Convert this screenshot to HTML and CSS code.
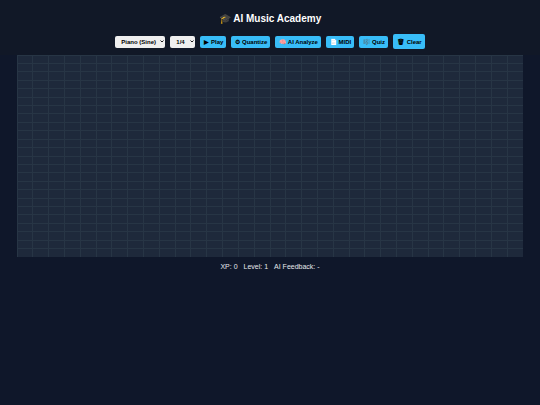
FILE: index.html
```
<!DOCTYPE html>
<html lang="en">
<head>
<meta charset="UTF-8">
<meta name="viewport" content="width=device-width, initial-scale=1.0">
<title>AI Music Academy</title>
<link rel="stylesheet" href="styles.css">
</head>
<body>

<header>
  <h1>🎓 AI Music Academy</h1>
  <div class="controls">
    <select id="instrument" class="instrument" aria-label="Instrument">
      <option value="sine">Piano (Sine)</option>
      <option value="square">Synth</option>
      <option value="triangle">Flute</option>
    </select>
    <select id="noteLength" class="length" aria-label="Note length">
      <option value="1">1/4</option>
      <option value="0.5">1/8</option>
      <option value="0.25">1/16</option>
    </select>
    <button id="play">▶ Play</button>
    <button id="quantize">⚙ Quantize</button>
    <button id="analyze">🧠 AI Analyze</button>
    <button id="midi">📄 MIDI</button>
    <button id="quiz">🎼 Quiz</button>
    <button id="clear" class="clear">🗑 Clear</button>
  </div>
</header>

<main>
  <canvas id="roll"></canvas>
  <div class="status">
    <span>XP: <span id="xp">0</span></span>
    <span>Level: <span id="level">1</span></span>
    <span>AI Feedback: <span id="feedback">-</span></span>
  </div>
</main>

<script src="script.js"></script>
</body>
</html>
```

FILE: styles.css
```
body {
  margin: 0;
  background: #0f172a;
  color: #e5e7eb;
  font-family: "Liberation Sans", Arial, sans-serif;
}

header {
  background: #111827;
  padding: 12px 8px 6px;
  text-align: center;
}

h1 {
  margin: 0 0 9px;
  font-size: 10px;
  line-height: 13px;
  color: #fff;
}

.controls {
  display: flex;
  flex-wrap: wrap;
  justify-content: center;
  align-items: center;
  gap: 5px;
}

button,
select {
  box-sizing: border-box;
  height: 12px;
  padding: 0 3px 0 4px;
  border: none;
  border-radius: 2px;
  font-family: inherit;
  font-size: 6px;
  font-weight: bold;
  line-height: 12px;
  color: #000;
  white-space: nowrap;
}

button {
  background: #38bdf8;
  cursor: pointer;
}

button:hover {
  background: #0ea5e9;
}

.clear {
  height: 15px;
}

select {
  appearance: none;
  padding: 0 6px;
  background: #efefef url("data:image/svg+xml,%3Csvg xmlns='http://www.w3.org/2000/svg' viewBox='0 0 8 6'%3E%3Cpath d='M1 1l3 3 3-3' fill='none' stroke='%23000' stroke-width='1.8'/%3E%3C/svg%3E") no-repeat right 1px center / 4px 3px;
}

.instrument {
  width: 50px;
}

.length {
  width: 25px;
}

canvas {
  display: block;
  width: calc(100% - 34px);
  aspect-ratio: 5 / 2;
  margin: 0 auto;
  background: #1e293b;
}

.status {
  display: flex;
  justify-content: center;
  gap: 6px;
  padding: 6px;
  font-size: 7px;
  line-height: 8px;
}
```

FILE: script.js
```
const canvas = document.getElementById("roll");
const ctx = canvas.getContext("2d");
const COLS = 32;
const ROWS = 24;

function drawGrid() {
  canvas.width = canvas.clientWidth;
  canvas.height = canvas.clientHeight;
  ctx.strokeStyle = "#273545";
  ctx.lineWidth = 1;
  ctx.beginPath();
  for (let i = 0; i <= COLS; i++) {
    const x = Math.floor(i * canvas.width / COLS) + 0.5;
    ctx.moveTo(x, 0);
    ctx.lineTo(x, canvas.height);
  }
  for (let j = 0; j <= ROWS; j++) {
    const y = Math.floor(j * canvas.height / ROWS) + 0.5;
    ctx.moveTo(0, y);
    ctx.lineTo(canvas.width, y);
  }
  ctx.stroke();
}

window.addEventListener("resize", drawGrid);
drawGrid();
```
